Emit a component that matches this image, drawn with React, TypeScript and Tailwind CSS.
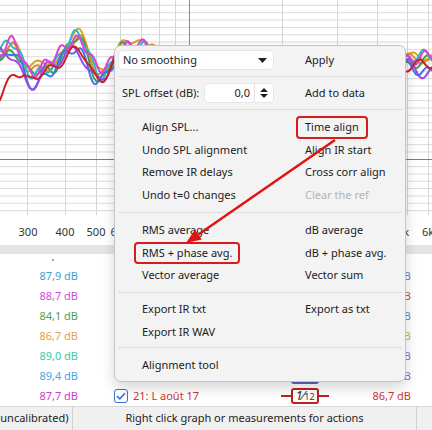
import React from "react";

const VX = [27, 65, 96, 120, 141, 159, 175, 282, 337, 377, 407, 428];
const HY: number[] = [];
for (let k = -21; k <= 7; k++) if (k !== 0) HY.push(159.3 + k * 7.33);

const KEY: [number, number][] = [
  [-10, 56], [0, 52], [12, 46], [30, 72], [50, 64], [78, 38], [100, 74], [125, 46],
  [145, 50], [200, 62], [280, 58], [350, 62], [400, 60], [420, 58], [440, 60],
];
function trend(x: number) {
  for (let i = 0; i < KEY.length - 1; i++) {
    const [x0, y0] = KEY[i];
    const [x1, y1] = KEY[i + 1];
    if (x >= x0 && x <= x1) {
      const t = (x - x0) / (x1 - x0);
      const m = (1 - Math.cos(t * Math.PI)) / 2;
      return y0 + (y1 - y0) * m;
    }
  }
  return 58;
}

type Curve = { c: string; off: number; a: number; f: number; p: number; a2: number; f2: number; p2: number; red?: boolean };
const CURVES: Curve[] = [
  { c: "#d6a823", off: -4, a: 3, f: 0.3, p: 0, a2: 3, f2: 0.12, p2: 1 },
  { c: "#e8892a", off: 1, a: 4, f: 0.27, p: 1.2, a2: 3, f2: 0.1, p2: 2 },
  { c: "#3aa04a", off: 3, a: 4, f: 0.33, p: 2.1, a2: 4, f2: 0.14, p2: 0.5 },
  { c: "#29bcc6", off: 0, a: 5, f: 0.36, p: 3.0, a2: 4, f2: 0.09, p2: 4 },
  { c: "#3c78e0", off: 9, a: 5, f: 0.31, p: 4.2, a2: 5, f2: 0.13, p2: 3 },
  { c: "#9a48e8", off: 8, a: 6, f: 0.26, p: 5.1, a2: 7, f2: 0.11, p2: 5 },
  { c: "#e040d8", off: -2, a: 5, f: 0.38, p: 0.6, a2: 4, f2: 0.15, p2: 2.5 },
  { c: "#c8222a", off: 8, a: 4, f: 0.29, p: 2.6, a2: 3, f2: 0.1, p2: 0, red: true },
];
function curvePath(cv: Curve) {
  let d = "";
  for (let x = -2; x <= 434; x += 2) {
    let y = trend(x) + cv.a * Math.sin(x * cv.f + cv.p) + cv.a2 * Math.sin(x * cv.f2 + cv.p2) + cv.off;
    if (cv.red && x < 24) y += 38 * (1 - Math.max(0, x) / 24);
    d += (x === -2 ? "M" : "L") + x + " " + y.toFixed(1) + " ";
  }
  return d;
}

const LABELS: [string, number][] = [
  ["300", 28], ["400", 65], ["500", 96], ["600", 120], ["5k", 403], ["6k", 428],
];

function Graph() {
  return (
    <svg width="432" height="245" className="block shrink-0">
      <rect x="0" y="0" width="432" height="245" fill="#ffffff" />
      {HY.map((y, i) => (
        <line key={"h" + i} x1="0" x2="432" y1={y} y2={y} stroke="#dcdcdc" strokeWidth="1" />
      ))}
      {VX.map((x, i) => (
        <line key={"v" + i} x1={x + 0.5} x2={x + 0.5} y1="0" y2="215" stroke="#d6d6d6" strokeWidth="1" />
      ))}
      <line x1="189.5" x2="189.5" y1="0" y2="215" stroke="#8a8a8a" strokeWidth="1" />
      <line x1="0" x2="432" y1="159.5" y2="159.5" stroke="#7a7a7a" strokeWidth="1" />
      {CURVES.map((cv, i) => (
        <path key={"c" + i} d={curvePath(cv)} fill="none" stroke={cv.c} strokeWidth="2" strokeLinejoin="round" />
      ))}
      {LABELS.map(([t, x]) => (
        <text key={t} x={x} y="236" textAnchor="middle" fontSize="11" fill="#333" fontFamily="'Noto Sans', sans-serif">
          {t}
        </text>
      ))}
    </svg>
  );
}

function Sep({ cls }: { cls: string }) {
  return <div className={"mx-[3px] h-px bg-[#dcdcdc] " + cls} />;
}

function Item({ left, right, leftBox, rightBox, rightDisabled }: { left: string; right?: string; leftBox?: boolean; rightBox?: boolean; rightDisabled?: boolean }) {
  return (
    <div className="flex h-[22.5px] items-stretch whitespace-nowrap">
      <div className="w-[181px] pl-[19px] flex items-stretch">
        <span className={"flex items-center px-[6px] border-2 rounded-[4px] " + (leftBox ? "border-[#d81b1b]" : "border-transparent")}>{left}</span>
      </div>
      {right && (
        <div className="flex items-stretch">
          <span className={"flex items-center px-[7px] border-2 rounded-[4px] " + (rightBox ? "border-[#d81b1b] " : "border-transparent ") + (rightDisabled ? "text-[#b4b4b4]" : "")}>{right}</span>
        </div>
      )}
    </div>
  );
}

function Menu() {
  return (
    <div className="absolute left-[114px] top-[45px] w-[292px] h-[337px] rounded-[7px] border border-[#c4c4c4] bg-[#f3f3f3] shadow-[0_6px_14px_rgba(0,0,0,0.16)] text-[11px] text-[#1b1b1b]">
      <div className="flex items-center mt-[4px] pl-[3px] h-[20px] whitespace-nowrap">
        <div className="w-[156px] h-[20px] bg-white rounded-[4px] border border-[#e6e6e6] flex items-center justify-between pl-[4px] pr-[6px]">
          <span>No smoothing</span>
          <svg width="9" height="5" viewBox="0 0 9 5"><polygon points="0,0 9,0 4.5,5" fill="#222" /></svg>
        </div>
        <span className="ml-[31px]">Apply</span>
      </div>
      <Sep cls="mt-[6px]" />
      <div className="flex items-center mt-[6px] pl-[7px] h-[20px] whitespace-nowrap">
        <span className="w-[82px]">SPL offset (dB):</span>
        <div className="w-[70px] h-[20px] bg-white rounded-[4px] border border-[#e6e6e6] flex items-center">
          <span className="flex-1 text-right pr-[4px]">0,0</span>
          <div className="w-px h-[18px] bg-[#e2e2e2]" />
          <div className="w-[18px] flex flex-col items-center gap-[2px]">
            <svg width="8" height="4" viewBox="0 0 8 4"><polygon points="4,0 8,4 0,4" fill="#222" /></svg>
            <svg width="8" height="4" viewBox="0 0 8 4"><polygon points="0,0 8,0 4,4" fill="#222" /></svg>
          </div>
        </div>
        <span className="ml-[31px]">Add to data</span>
      </div>
      <Sep cls="mt-[6px]" />
      <div className="pt-[6px]">
        <Item left="Align SPL..." right="Time align" rightBox />
        <Item left="Undo SPL alignment" right="Align IR start" />
        <Item left="Remove IR delays" right="Cross corr align" />
        <Item left="Undo t=0 changes" right="Clear the ref" rightDisabled />
      </div>
      <Sep cls="mt-[6px]" />
      <div className="pt-[6px]">
        <Item left="RMS average" right="dB average" />
        <Item left="RMS + phase avg." right="dB + phase avg." leftBox />
        <Item left="Vector average" right="Vector sum" />
      </div>
      <Sep cls="mt-[5.5px]" />
      <div className="pt-[5px]">
        <Item left="Export IR txt" right="Export as txt" />
        <Item left="Export IR WAV" />
      </div>
      <Sep cls="mt-[4px]" />
      <div className="pt-[6px]">
        <Item left="Alignment tool" />
      </div>
    </div>
  );
}

const ROWS = [
  { l: "87,9 dB", lc: "text-[#3ea2cf]", r: "85,2 dB", rc: "text-[#7474dc]" },
  { l: "88,7 dB", lc: "text-[#c94fd9]", r: "86,1 dB", rc: "text-[#d44848]" },
  { l: "84,1 dB", lc: "text-[#4f9f4f]", r: "87,0 dB", rc: "text-[#4a8ae0]" },
  { l: "86,7 dB", lc: "text-[#e3a052]", r: "86,4 dB", rc: "text-[#cfae3c]" },
  { l: "89,0 dB", lc: "text-[#3fc9a0]", r: "88,2 dB", rc: "text-[#a062e0]" },
  { l: "89,4 dB", lc: "text-[#3fa8e2]", r: "87,3 dB", rc: "text-[#7f72e2]" },
];

function Check() {
  return (
    <div className="w-[14px] h-[14px] rounded-[3px] border-[1.5px] border-[#3a6fd6] bg-white flex items-center justify-center">
      <svg width="10" height="8" viewBox="0 0 10 8"><path d="M1 4.2 L3.8 6.8 L9 1.2" fill="none" stroke="#3a6fd6" strokeWidth="1.6" /></svg>
    </div>
  );
}

function List() {
  return (
    <div className="flex-1 bg-white pt-[12px] text-[11px] relative whitespace-nowrap">
      <div className="absolute left-[52px] top-[5px] w-[2px] h-[2px] bg-[#3ea2cf] rounded-full" />
      {ROWS.map((r, i) => (
        <div key={i} className="flex h-[20px] items-center">
          <div className={"w-[78px] text-right " + r.lc}>{r.l}</div>
          <div className="w-[203px]" />
          <div className="w-[48px] flex justify-center"><div className="w-[28px] h-[16px] rounded-[3px] bg-[#5d62b8]" /></div>
          <div className={"w-[82px] text-right " + r.rc}>{r.r}</div>
        </div>
      ))}
      <div className="flex h-[20px] items-center">
        <div className="w-[78px] text-right text-[#c442c8]">87,7 dB</div>
        <div className="ml-[36px]"><Check /></div>
        <div className="ml-[5px] w-[148px] text-[#c93636]">21: L août 17</div>
        <div className="w-[48px] flex items-center">
          <div className="w-[10px] h-[2px] bg-[#c02020]" />
          <div className="w-[28px] h-[16px] rounded-[3px] border-2 border-[#c02020] bg-white flex items-end justify-center leading-none text-[#333]">
            <span className="text-[13px] italic">1⁄</span><span className="text-[9px] mb-[1px]">12</span>
          </div>
          <div className="w-[10px] h-[2px] bg-[#c02020]" />
        </div>
        <div className="w-[82px] text-right text-[#c93636]">86,7 dB</div>
      </div>
    </div>
  );
}

function Status() {
  return (
    <div className="h-[24px] shrink-0 border-t border-[#d8d8d8] bg-[#f0f0f0] flex items-center text-[11px] text-[#1e1e1e] whitespace-nowrap">
      <div className="w-[72px] overflow-hidden"><span className="ml-[-3px] block">(uncalibrated)</span></div>
      <div className="w-px h-full bg-[#d0d0d0]" />
      <div className="w-[343px] text-center">Right click graph or measurements for actions</div>
      <div className="w-px h-full bg-[#d0d0d0]" />
    </div>
  );
}

export default function App() {
  return (
    <div className="relative w-[432px] h-[430px] overflow-hidden bg-white font-['Noto_Sans',sans-serif]">
      <div className="flex flex-col h-full">
        <Graph />
        <div className="h-[9px] shrink-0 bg-[#e4e4e4]" />
        <List />
        <Status />
      </div>
      <Menu />
      <svg width="432" height="430" className="absolute left-0 top-0 pointer-events-none">
        <line x1="335" y1="140" x2="198.4" y2="234.5" stroke="#e01414" strokeWidth="2.5" />
        <polygon points="186,243 201.8,239.5 195,229.5" fill="#e01414" />
      </svg>
    </div>
  );
}
